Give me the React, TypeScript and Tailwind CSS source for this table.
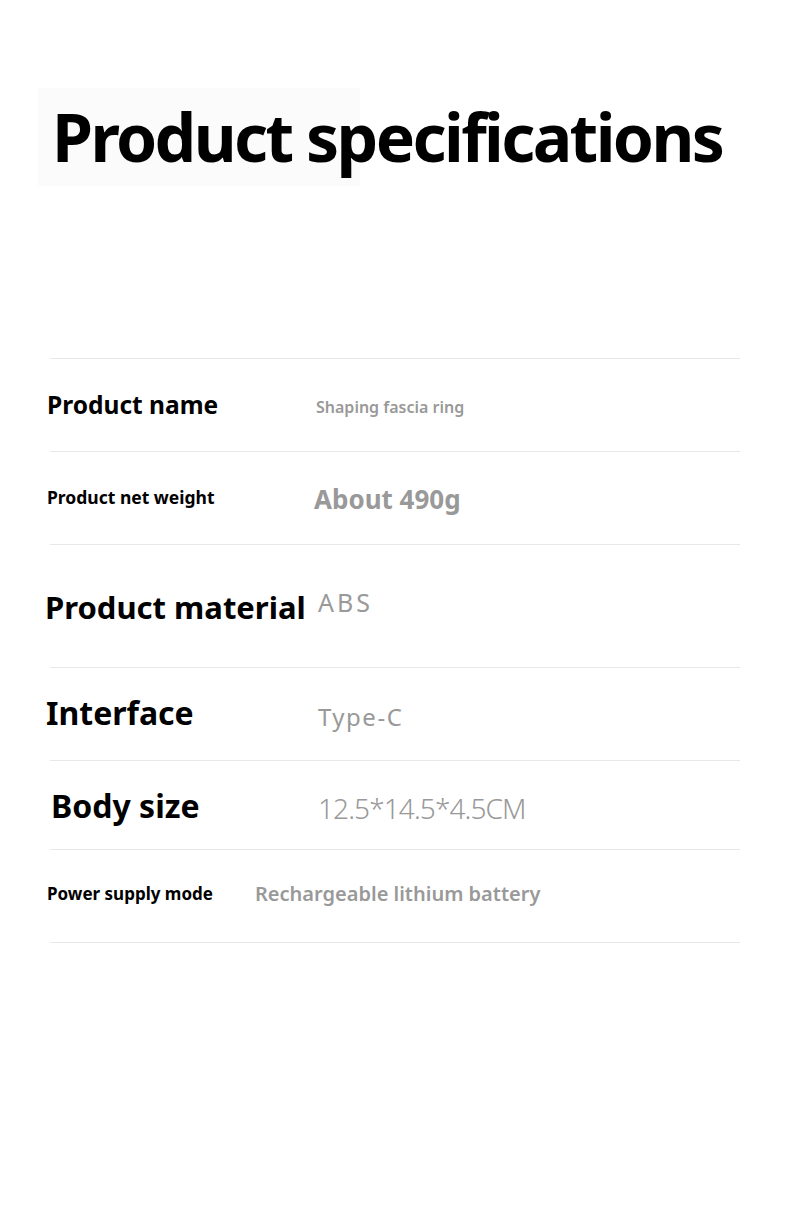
const rows = [
  {
    label: 'Product name',
    labelCls: '-ml-[3px] w-[269px] pt-[34px] text-[24.5px] font-bold',
    value: 'Shaping fascia ring',
    valueCls: 'pt-[40px] text-[16px] font-semibold',
    h: 'h-[93px] border-t',
  },
  {
    label: 'Product net weight',
    labelCls: '-ml-[3px] w-[267px] pt-[37px] text-[17.5px] font-bold',
    value: 'About 490g',
    valueCls: 'pt-[34px] text-[26px] font-bold',
    h: 'h-[93px] border-t',
  },
  {
    label: 'Product material',
    labelCls: '-ml-[5px] w-[273px] pt-[47px] text-[31px] font-bold',
    value: 'ABS',
    valueCls: 'pt-[45px] text-[25px] font-normal tracking-[3px]',
    h: 'h-[123px] border-t',
  },
  {
    label: 'Interface',
    labelCls: '-ml-[4px] w-[272px] pt-[29px] text-[32px] font-bold',
    value: 'Type-C',
    valueCls: 'pt-[37px] text-[24px] font-normal tracking-[1.5px]',
    h: 'h-[93px] border-t',
  },
  {
    label: 'Body size',
    labelCls: 'ml-[1px] w-[267px] pt-[29px] text-[32px] font-bold',
    value: '12.5*14.5*4.5CM',
    valueCls: 'pt-[33px] text-[28px] font-light tracking-[-0.9px]',
    h: 'h-[89px] border-t',
  },
  {
    label: 'Power supply mode',
    labelCls: '-ml-[3px] w-[208px] pt-[35px] text-[17px] font-bold',
    value: 'Rechargeable lithium battery',
    valueCls: 'pt-[34px] text-[20px] font-semibold',
    h: 'h-[94px] border-t border-b',
  },
];

export default function App() {
  return (
    <div className="w-[790px] h-[1207px] bg-white font-['Noto_Sans',sans-serif]">
      <div className="pt-[88px] pl-[38px]">
        <div className="w-[322px] h-[98px] bg-[#fbfbfb]">
          <h1 className="pl-[14px] pt-[15px] text-[66px] leading-none font-bold tracking-[-2.6px] text-black whitespace-nowrap">
            Product specifications
          </h1>
        </div>
      </div>

      <div className="mt-[172px] ml-[50px] w-[690px]">
        {rows.map((row, i) => (
          <div key={i} className={`flex items-start border-[#e8e8e8] ${row.h}`}>
            <span className={`shrink-0 leading-none text-black whitespace-nowrap ${row.labelCls}`}>
              {row.label}
            </span>
            <span className={`leading-none text-[#999999] whitespace-nowrap ${row.valueCls}`}>
              {row.value}
            </span>
          </div>
        ))}
      </div>
    </div>
  );
}
